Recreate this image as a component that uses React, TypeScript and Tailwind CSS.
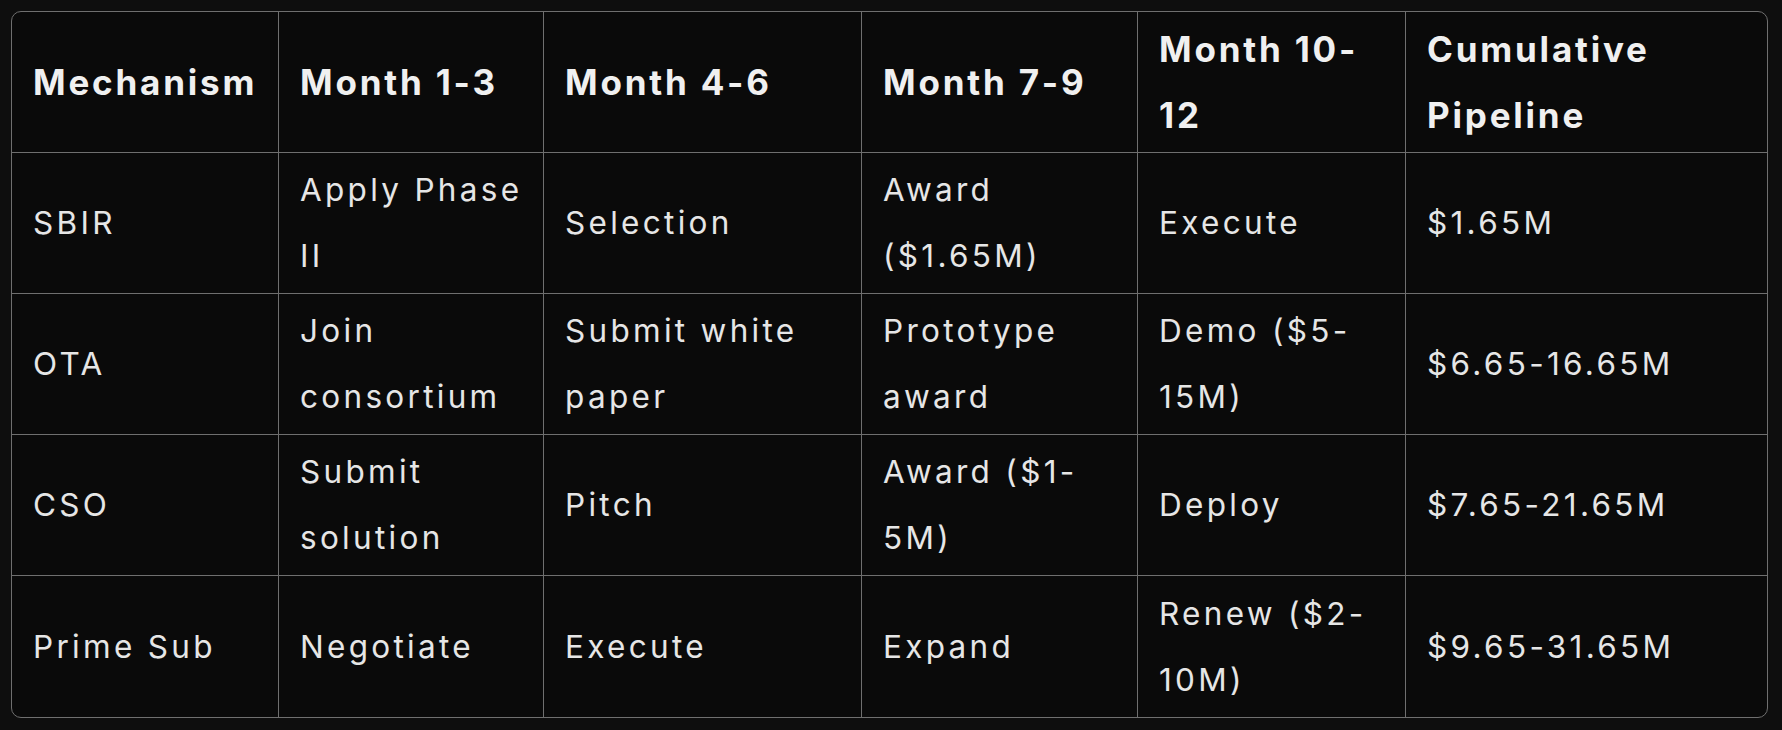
import React from 'react';

type Cell = string[];

const HEADERS: Cell[] = [
  ['Mechanism'],
  ['Month 1-3'],
  ['Month 4-6'],
  ['Month 7-9'],
  ['Month 10-', '12'],
  ['Cumulative', 'Pipeline'],
];

const ROWS: Cell[][] = [
  [['SBIR'], ['Apply Phase', 'II'], ['Selection'], ['Award', '($1.65M)'], ['Execute'], ['$1.65M']],
  [['OTA'], ['Join', 'consortium'], ['Submit white', 'paper'], ['Prototype', 'award'], ['Demo ($5-', '15M)'], ['$6.65-16.65M']],
  [['CSO'], ['Submit', 'solution'], ['Pitch'], ['Award ($1-', '5M)'], ['Deploy'], ['$7.65-21.65M']],
  [['Prime Sub'], ['Negotiate'], ['Execute'], ['Expand'], ['Renew ($2-', '10M)'], ['$9.65-31.65M']],
];

const FONT = { fontFamily: 'Inter, "Noto Sans", sans-serif' };

const TableCell: React.FC<{ lines: string[]; header?: boolean; lastCol: boolean; lastRow: boolean }> = ({
  lines,
  header,
  lastCol,
  lastRow,
}) => (
  <div
    className={[
      'h-[141px] flex flex-col justify-center pl-[21px] pr-2 border-[#6f6f6f]',
      lastCol ? '' : 'border-r',
      lastRow ? '' : 'border-b',
    ].join(' ')}
  >
    {lines.map((l, i) => (
      <div
        key={i}
        className={
          header
            ? 'whitespace-nowrap text-[35px] leading-[66px] font-bold tracking-[2.8px] text-[#f0f0f0]'
            : 'whitespace-nowrap text-[31.5px] leading-[66px] tracking-[3.3px] text-[#e6e6e6]'
        }
      >
        {l}
      </div>
    ))}
  </div>
);

export default function App() {
  return (
    <div className="min-h-screen w-full bg-[#0e0e0e] pt-[11px] pl-[11px]" style={FONT}>
      {/* table frame */}
      <div className="w-[1757px] rounded-[10px] border border-[#6f6f6f] bg-[#0a0a0a] overflow-hidden">
        <div className="grid grid-cols-[267px_265px_318px_276px_268px_1fr]">
          {HEADERS.map((h, c) => (
            <TableCell key={'h' + c} lines={h} header lastCol={c === 5} lastRow={false} />
          ))}
          {ROWS.map((row, r) =>
            row.map((cell, c) => (
              <TableCell key={r + '-' + c} lines={cell} lastCol={c === 5} lastRow={r === ROWS.length - 1} />
            ))
          )}
        </div>
      </div>
    </div>
  );
}
